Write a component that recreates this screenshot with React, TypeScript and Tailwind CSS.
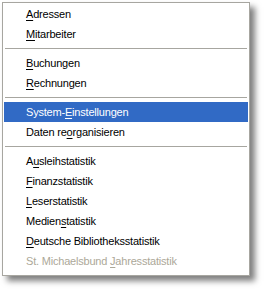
import React from "react";

type Item =
  | { sep: true }
  | { sep?: false; pre: string; key: string; post: string; active?: boolean; disabled?: boolean };

const items: Item[] = [
  { pre: "", key: "A", post: "dressen" },
  { pre: "", key: "M", post: "itarbeiter" },
  { sep: true },
  { pre: "", key: "B", post: "uchungen" },
  { pre: "", key: "R", post: "echnungen" },
  { sep: true },
  { pre: "System-", key: "E", post: "instellungen", active: true },
  { pre: "Daten re", key: "o", post: "rganisieren" },
  { sep: true },
  { pre: "A", key: "u", post: "sleihstatistik" },
  { pre: "", key: "F", post: "inanzstatistik" },
  { pre: "", key: "L", post: "eserstatistik" },
  { pre: "Medien", key: "s", post: "tatistik" },
  { pre: "", key: "D", post: "eutsche Bibliotheksstatistik" },
  { pre: "St. Michaelsbund ", key: "J", post: "ahresstatistik", disabled: true },
];

export default function App() {
  return (
    <div className="w-[264px] h-[289px] bg-white p-[2px]">
      <div className="w-[248px] border border-[#a7a6a0] bg-white p-[1px] shadow-[5px_5px_6px_rgba(0,0,0,0.5)] font-['Liberation_Sans',sans-serif] text-[11px] tracking-[-0.2px]">
        {items.map((it, i) =>
          it.sep ? (
            <div key={i} className="h-[9px] flex items-center px-[1px]">
              <div className="h-px w-full bg-[#a7a6a0]" />
            </div>
          ) : (
            <div
              key={i}
              className={`h-[20px] flex items-center pl-[22px] ${
                it.active ? "bg-[#316ac5] text-white" : it.disabled ? "text-[#aca899]" : "text-black"
              }`}
            >
              <span>
                {it.pre}
                <u className="underline-offset-[2px]">{it.key}</u>
                {it.post}
              </span>
            </div>
          )
        )}
        <div className="h-[3px]" />
      </div>
    </div>
  );
}
